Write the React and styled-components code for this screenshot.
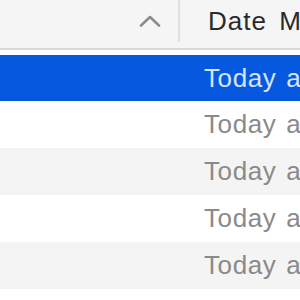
import React from "react";
import styled, { createGlobalStyle } from "styled-components";

const GlobalStyle = createGlobalStyle`
  html, body {
    margin: 0;
    padding: 0;
    background: #ffffff;
    overflow: hidden;
  }
  body {
    font-family: "Liberation Sans", Arial, sans-serif;
  }
`;

const rows = [
  { date: "Today at 10:42 AM", selected: true },
  { date: "Today at 10:41 AM" },
  { date: "Today at 10:40 AM" },
  { date: "Today at 10:38 AM" },
  { date: "Today at 10:37 AM" },
  { date: "Today at 10:35 AM" },
];

const FileList = () => {
  return (
    <StyledList>
      <GlobalStyle />
      <HeaderBar>
        <NameHeader>
          <svg width="22" height="12" viewBox="0 0 22 12">
            <polyline
              points="2,10.5 11,2 20,10.5"
              fill="none"
              stroke="#8c8c8c"
              strokeWidth="2.6"
              strokeLinejoin="round"
              strokeLinecap="round"
            />
          </svg>
        </NameHeader>
        <Divider />
        <DateHeader>Date Modified</DateHeader>
      </HeaderBar>
      <Gap />
      {rows.map((row, i) => (
        <Row
          key={i}
          $selected={row.selected}
          $grey={i % 2 === 0}
          $height={row.selected ? 46 : 47}
        >
          <NameCell />
          <DateCell $selected={row.selected}>{row.date}</DateCell>
        </Row>
      ))}
    </StyledList>
  );
};

const StyledList = styled.div`
  width: 300px;
  height: 300px;
  display: flex;
  flex-direction: column;
  overflow: hidden;
`;

const HeaderBar = styled.div`
  height: 48px;
  flex-shrink: 0;
  display: flex;
  background: #f5f5f5;
  border-bottom: 2px solid #d9d9d9;
`;

const NameHeader = styled.div`
  width: 178px;
  flex-shrink: 0;
  display: flex;
  justify-content: flex-end;
  align-items: flex-start;
  padding-top: 15px;
  padding-right: 17px;
  box-sizing: border-box;
`;

const Divider = styled.div`
  width: 2px;
  height: 42px;
  flex-shrink: 0;
  background: #e0e0e0;
`;

const DateHeader = styled.div`
  padding-left: 28px;
  padding-bottom: 5px;
  display: flex;
  align-items: center;
  font-size: 26px;
  letter-spacing: 1px;
  word-spacing: 4px;
  color: #2a2a2a;
  white-space: nowrap;
`;

const Gap = styled.div`
  height: 5px;
  flex-shrink: 0;
`;

const Row = styled.div`
  height: ${({ $height }) => $height}px;
  flex-shrink: 0;
  display: flex;
  align-items: center;
  background: ${({ $selected, $grey }) =>
    $selected ? "#0659de" : $grey ? "#f4f4f4" : "#ffffff"};
`;

const NameCell = styled.div`
  width: 180px;
  flex-shrink: 0;
`;

const DateCell = styled.div`
  padding-left: 24px;
  font-size: 26px;
  letter-spacing: 0.6px;
  word-spacing: 2px;
  white-space: nowrap;
  color: ${({ $selected }) => ($selected ? "#d6e4ff" : "#8a8a8a")};
`;

export default FileList;
